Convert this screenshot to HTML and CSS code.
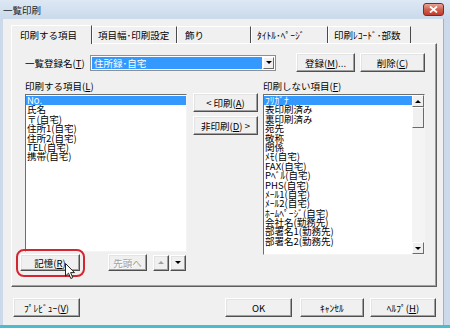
FILE: index.html
```html
<!DOCTYPE html>
<html>
<head>
    <meta charset="utf-8">
    <title>一覧印刷</title>
    <link rel="stylesheet" href="styles.css">
</head>
<body>
<div class="window">
    <!-- title bar -->
    <div class="title-bar">
        <span class="title-text">一覧印刷</span>
        <div class="close-btn">
            <svg width="9" height="7" viewBox="0 0 9 7">
                <path d="M1 0.5 L8 6.5 M8 0.5 L1 6.5" stroke="#fff" stroke-width="1.8"/>
            </svg>
        </div>
    </div>

    <div class="client">
        <!-- tabs -->
        <div class="tab-strip">
            <div class="tab tab-active tab-1">印刷する項目</div>
            <div class="tab tab-2">項目幅･印刷設定</div>
            <div class="tab tab-3">飾り</div>
            <div class="tab tab-4">ﾀｲﾄﾙ･ﾍﾟｰｼﾞ</div>
            <div class="tab tab-5">印刷ﾚｺｰﾄﾞ･部数</div>
        </div>

        <div class="tab-panel">
            <div class="register-row">
                <span class="field-label">一覧登録名(<u>T</u>)</span>
                <div class="combo">
                    <span class="combo-value">住所録･自宅</span>
                    <span class="combo-arrow"><span class="tri-down"></span></span>
                </div>
                <button class="btn btn-register">登録(<u>M</u>)...</button>
                <button class="btn btn-delete">削除(<u>C</u>)</button>
            </div>

            <div class="lists-area">
                <!-- items to print -->
                <div class="left-col">
                    <div class="list-label">印刷する項目(<u>L</u>)</div>
                    <div class="listbox listbox-left">
                        <div class="list-items">
                            <div class="list-item selected">No.</div>
                            <div class="list-item">氏名</div>
                            <div class="list-item">〒(自宅)</div>
                            <div class="list-item">住所1(自宅)</div>
                            <div class="list-item">住所2(自宅)</div>
                            <div class="list-item">TEL(自宅)</div>
                            <div class="list-item">携帯(自宅)</div>
                        </div>
                    </div>
                    <div class="left-tools">
                        <div class="memo-wrap">
                            <button class="btn btn-memo">記憶(<u>R</u>)</button>
                            <div class="highlight-ring"></div>
                            <svg class="cursor" width="11" height="17" viewBox="0 0 11 17">
                                <path d="M0.5 0.5 L0.5 13 L3.5 10.2 L5.8 15.5 L7.8 14.6 L5.6 9.6 L9.5 9.6 Z" fill="#fff" stroke="#222" stroke-width="1"/>
                            </svg>
                        </div>
                        <button class="btn btn-top" disabled>先頭へ</button>
                        <button class="btn btn-arrow"><span class="tri-up tri-disabled"></span></button>
                        <button class="btn btn-arrow btn-arrow-down"><span class="tri-down"></span></button>
                    </div>
                </div>

                <!-- move buttons -->
                <div class="mid-col">
                    <button class="btn btn-move">&lt; 印刷(<u>A</u>)</button>
                    <button class="btn btn-move">非印刷(<u>D</u>) &gt;</button>
                </div>

                <!-- items not printed -->
                <div class="right-col">
                    <div class="list-label">印刷しない項目(<u>F</u>)</div>
                    <div class="listbox listbox-right">
                        <div class="list-items">
                            <div class="list-item selected">ﾌﾘｶﾞﾅ</div>
                            <div class="list-item">表印刷済み</div>
                            <div class="list-item">裏印刷済み</div>
                            <div class="list-item">宛先</div>
                            <div class="list-item">敬称</div>
                            <div class="list-item">関係</div>
                            <div class="list-item">ﾒﾓ(自宅)</div>
                            <div class="list-item">FAX(自宅)</div>
                            <div class="list-item">Pﾍﾞﾙ(自宅)</div>
                            <div class="list-item">PHS(自宅)</div>
                            <div class="list-item">ﾒｰﾙ1(自宅)</div>
                            <div class="list-item">ﾒｰﾙ2(自宅)</div>
                            <div class="list-item">ﾎｰﾑﾍﾟｰｼﾞ(自宅)</div>
                            <div class="list-item">会社名(勤務先)</div>
                            <div class="list-item">部署名1(勤務先)</div>
                            <div class="list-item">部署名2(勤務先)</div>
                        </div>
                        <div class="scrollbar">
                            <div class="sb-btn"><span class="tri-up"></span></div>
                            <div class="sb-thumb"></div>
                            <div class="sb-track"></div>
                            <div class="sb-btn"><span class="tri-down"></span></div>
                        </div>
                    </div>
                </div>
            </div>
        </div>

        <!-- dialog buttons -->
        <div class="dialog-buttons">
            <button class="btn btn-preview">ﾌﾟﾚﾋﾞｭｰ(<u>V</u>)</button>
            <button class="btn btn-ok">OK</button>
            <button class="btn btn-cancel">ｷｬﾝｾﾙ</button>
            <button class="btn btn-help">ﾍﾙﾌﾟ(<u>H</u>)</button>
        </div>
    </div>
</div>
</body>
</html>
```

FILE: styles.css
```css
* {
    box-sizing: border-box;
}

body {
    margin: 0;
    font-family: "Noto Sans CJK JP", "Noto Sans", sans-serif;
    font-size: 9.5px;
    color: #000;
}

.window {
    width: 450px;
    height: 328px;
    display: flex;
    flex-direction: column;
    background-color: #cbd9eb;
    border-bottom: 3px solid #4abccb;
}

/* title bar */
.title-bar {
    height: 19px;
    display: flex;
    align-items: center;
    justify-content: space-between;
    padding: 0 6px 0 3px;
    background: linear-gradient(#dde8f4, #cad9eb);
}
.title-text {
    font-size: 9.5px;
    color: #1e1e1e;
}
.close-btn {
    width: 21px;
    height: 13px;
    margin-top: -1px;
    border: 1px solid #7a2c24;
    border-radius: 3px;
    background: linear-gradient(#e9a497, #d0604f 50%, #c33a2c);
    display: flex;
    align-items: center;
    justify-content: center;
}

.client {
    flex: 1;
    margin: 0 6px 0 3px;
    padding: 3px 0 0 8px;
    background-color: #f0f0f0;
    border-right: 1px solid #a3b1c2;
}

/* tabs */
.tab-strip {
    display: flex;
    align-items: flex-end;
    height: 21px;
}
.tab {
    height: 17px;
    padding-left: 5px;
    line-height: 16px;
    white-space: nowrap;
    border-top: 1px solid #fff;
    border-left: 1px solid #fff;
    border-right: 1px solid #4a4a4a;
}
.tab-active {
    height: 19px;
    line-height: 18px;
    padding-left: 8px;
    margin-bottom: -1px;
    background-color: #f0f0f0;
    position: relative;
}
.tab-1 { width: 81px; }
.tab-2 { width: 85px; }
.tab-3 { width: 74px; padding-left: 7px; }
.tab-4 { width: 77px; }
.tab-5 { width: 83px; }

.tab-panel {
    width: 426px;
    height: 244px;
    padding: 9px 0 0 8px;
    border: 1px solid;
    border-color: #fff #5e5e5e #5e5e5e #fff;
    box-shadow: inset -1px -1px #a0a0a0;
}

/* buttons */
.btn {
    font-family: inherit;
    font-size: 9.5px;
    color: #000;
    height: 19px;
    padding: 0;
    background-color: #f0f0f0;
    border: 1px solid;
    border-color: #fff #505050 #505050 #fff;
    box-shadow: inset -1px -1px #a0a0a0, inset 1px 1px #e3e3e3;
    white-space: nowrap;
}
.btn u {
    text-underline-offset: 1px;
}

.register-row {
    display: flex;
    align-items: center;
    height: 19px;
}
.field-label {
    margin-left: 5px;
    width: 65px;
    white-space: nowrap;
}
.combo {
    width: 186px;
    height: 16px;
    display: flex;
    padding: 1px;
    background-color: #fff;
    border: 1px solid #8b9097;
}
.combo-value {
    flex: 1;
    padding-left: 2px;
    line-height: 12px;
    color: #fff;
    background-color: #3399ff;
}
.combo-arrow {
    width: 11px;
    margin-left: 1px;
    display: flex;
    align-items: center;
    justify-content: center;
    background-color: #f0f0f0;
    border: 1px solid;
    border-color: #fff #6a6a6a #6a6a6a #fff;
}
.btn-register {
    margin-left: 20px;
    width: 59px;
}
.btn-delete {
    margin-left: 5px;
    width: 65px;
}

/* triangles */
.tri-down,
.tri-up {
    width: 0;
    height: 0;
    border-left: 3px solid transparent;
    border-right: 3px solid transparent;
}
.tri-down {
    border-top: 3px solid #000;
}
.tri-up {
    border-bottom: 3px solid #000;
}
.tri-up.tri-disabled {
    border-bottom-color: #a0a0a0;
}

/* lists */
.lists-area {
    display: flex;
    margin-top: 8px;
}
.left-col {
    width: 167px;
    display: flex;
    flex-direction: column;
}
.list-label {
    height: 12px;
    line-height: 12px;
    margin-bottom: 2px;
    white-space: nowrap;
}
.left-col .list-label {
    margin-left: 5px;
}
.listbox {
    display: flex;
    background-color: #fff;
    border: 1px solid;
    border-color: #6e6e6e #f4f4f4 #f4f4f4 #6e6e6e;
}
.listbox-left {
    margin-left: 5px;
    width: 162px;
    height: 158px;
}
.listbox-right {
    width: 162px;
    height: 161px;
}
.list-items {
    flex: 1;
    padding-top: 1px;
}
.list-item {
    height: 9.4px;
    line-height: 9.4px;
    padding-left: 1px;
    white-space: nowrap;
}
.list-item.selected {
    color: #fff;
    background-color: #3399ff;
}

.scrollbar {
    width: 12px;
    display: flex;
    flex-direction: column;
    background-color: #f4f4f4;
}
.sb-btn {
    height: 12px;
    display: flex;
    align-items: center;
    justify-content: center;
    background-color: #f0f0f0;
    border: 1px solid;
    border-color: #fff #6a6a6a #6a6a6a #fff;
}
.sb-thumb {
    height: 21px;
    background-color: #f0f0f0;
    border: 1px solid;
    border-color: #fff #6a6a6a #6a6a6a #fff;
}
.sb-track {
    flex: 1;
}

.left-tools {
    display: flex;
    align-items: center;
    margin-top: 2px;
    height: 17px;
}
.memo-wrap {
    position: relative;
    height: 17px;
}
.btn-memo {
    width: 60px;
    height: 17px;
}
.highlight-ring {
    position: absolute;
    left: -4px;
    top: -5px;
    width: 69px;
    height: 28px;
    border: 2px solid #d3262e;
    border-radius: 8px;
}
.cursor {
    position: absolute;
    left: 45px;
    top: 9px;
}
.btn-top {
    margin-left: 28px;
    width: 39px;
    height: 17px;
    color: #a0a0a0;
    text-shadow: 1px 1px #fff;
}
.btn-arrow {
    margin-left: 6px;
    width: 16px;
    height: 16px;
    display: flex;
    align-items: center;
    justify-content: center;
}
.btn-arrow-down {
    margin-left: 1px;
}

.mid-col {
    width: 65px;
    margin-left: 6px;
    padding-top: 13px;
    display: flex;
    flex-direction: column;
    gap: 4px;
}
.btn-move {
    width: 65px;
}

.right-col {
    width: 162px;
    margin-left: 5px;
}

/* bottom row */
.dialog-buttons {
    display: flex;
    margin-top: 11px;
    margin-left: 2px;
}
.btn-preview {
    width: 67px;
}
.btn-ok {
    margin-left: 145px;
    width: 67px;
}
.btn-cancel {
    margin-left: 8px;
    width: 64px;
}
.btn-help {
    margin-left: 6px;
    width: 66px;
}
```
